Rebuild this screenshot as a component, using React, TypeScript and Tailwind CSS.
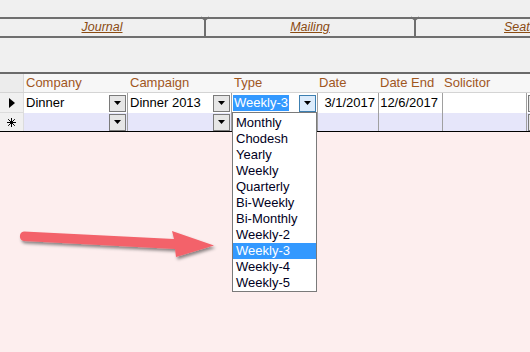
import React from 'react';

const typeOptions = [
  'Monthly',
  'Chodesh',
  'Yearly',
  'Weekly',
  'Quarterly',
  'Bi-Weekly',
  'Bi-Monthly',
  'Weekly-2',
  'Weekly-3',
  'Weekly-4',
  'Weekly-5',
];

function ComboButton({ focused = false }: { focused?: boolean }) {
  return (
    <div
      className={`w-[17px] h-[17px] shrink-0 flex items-center justify-center border ${
        focused ? 'border-[#3c7fb1] bg-[#dcecfc]' : 'border-[#7a7a7a] bg-[#e6e6e6]'
      }`}
    >
      <svg width="7" height="4" viewBox="0 0 7 4">
        <path d="M0 0h7L3.5 4z" fill="#000" />
      </svg>
    </div>
  );
}

function Tab({ label, className }: { label: string; className: string }) {
  return (
    <div className={`${className} shrink-0 flex items-center justify-center`}>
      <span className="italic underline text-[12.5px] text-[#8a4b12] font-['Liberation_Sans',Arial,sans-serif]">
        {label}
      </span>
    </div>
  );
}

function TabDivider() {
  return (
    <div className="relative w-[2px] shrink-0 bg-[#6f6f6f]">
      <svg className="absolute -top-[3px] -left-[3px]" width="8" height="5" viewBox="0 0 8 5">
        <path d="M0 1 L4 4 L8 1" stroke="#6f6f6f" strokeWidth="1.5" fill="none" />
      </svg>
    </div>
  );
}

export default function App() {
  return (
    <div className="relative w-[530px] h-[352px] overflow-hidden bg-[#fdeeee] text-[13px] text-black font-['Liberation_Sans',Arial,sans-serif]">
      {/* tab strip area */}
      <div className="h-[72px] bg-[#f0f0f0] pt-[17px]">
        <div className="flex h-[21px] border-t-2 border-b-2 border-[#6f6f6f]">
          <Tab label="Journal" className="w-[204px]" />
          <TabDivider />
          <Tab label="Mailing" className="w-[208px]" />
          <TabDivider />
          <Tab label="Seats" className="w-[208px]" />
        </div>
      </div>
      <div className="h-[2px] bg-[#6a6a6a]" />

      {/* header */}
      <div className="flex h-[19px] bg-[#f7f7f7] border-b border-[#d4d4d4] text-[#a0561e] leading-[17px]">
        <div className="w-[24px] shrink-0 bg-[#ececec] border-r border-[#d8d8d8]" />
        <div className="w-[104px] shrink-0 pl-[2px]">Company</div>
        <div className="w-[104px] shrink-0 pl-[2px]">Campaign</div>
        <div className="w-[85px] shrink-0 pl-[2px]">Type</div>
        <div className="w-[62px] shrink-0 pl-[2px]">Date</div>
        <div className="w-[64px] shrink-0 pl-[1px]">Date End</div>
        <div className="flex-1 pl-[1px]">Solicitor</div>
      </div>

      {/* current row */}
      <div className="flex h-[20px] bg-white">
        <div className="w-[24px] shrink-0 bg-[#f0f0f0] border-r border-b border-[#dcdcdc] flex items-center justify-center">
          <svg width="6" height="10" viewBox="0 0 6 10">
            <path d="M0 0L6 5L0 10z" fill="#000" />
          </svg>
        </div>
        <div className="w-[104px] shrink-0 flex items-center pl-[2px] pr-[1px] border-r border-[#a0a0a0]">
          <span className="flex-1">Dinner</span>
          <ComboButton />
        </div>
        <div className="w-[104px] shrink-0 flex items-center pl-[2px] pr-[1px] border-r border-[#a0a0a0]">
          <span className="flex-1">Dinner 2013</span>
          <ComboButton />
        </div>
        <div className="w-[85px] shrink-0 flex items-center pl-[1px] pr-[1px]">
          <span className="flex-1">
            <span className="bg-[#3399ff] text-white px-[1px] leading-[16px] inline-block">Weekly-3</span>
          </span>
          <ComboButton focused />
        </div>
        <div className="w-[62px] shrink-0 flex items-center justify-end pr-[3px] border-r border-l border-[#a0a0a0]">
          3/1/2017
        </div>
        <div className="w-[64px] shrink-0 flex items-center justify-end pr-[4px] border-r border-[#a0a0a0]">
          12/6/2017
        </div>
        <div className="w-[84px] shrink-0 border-r border-[#a0a0a0]" />
        <div className="flex items-center pl-[1px]">
          <ComboButton />
        </div>
      </div>

      {/* new record row */}
      <div className="flex h-[19px] bg-[#e6e6fa] border-b border-black">
        <div className="w-[24px] shrink-0 bg-[#f0f0f0] border-r border-[#dcdcdc] flex items-center justify-center">
          <svg width="9" height="9" viewBox="0 0 9 9">
            <path d="M4.5 0v9M0 4.5h9M1.2 1.2l6.6 6.6M7.8 1.2l-6.6 6.6" stroke="#000" strokeWidth="1" />
          </svg>
        </div>
        <div className="w-[104px] shrink-0 flex items-center justify-end pr-[1px] border-r border-[#a0a0a0]">
          <ComboButton />
        </div>
        <div className="w-[104px] shrink-0 flex items-center justify-end pr-[1px] border-r border-[#a0a0a0]">
          <ComboButton />
        </div>
        <div className="w-[85px] shrink-0" />
        <div className="w-[62px] shrink-0 border-r border-l border-[#a0a0a0]" />
        <div className="w-[64px] shrink-0 border-r border-[#a0a0a0]" />
        <div className="w-[84px] shrink-0 border-r border-[#a0a0a0]" />
        <div className="flex items-center pl-[1px]">
          <ComboButton />
        </div>
      </div>

      {/* open dropdown list */}
      <div className="absolute left-[232px] top-[112px] w-[85px] h-[180px] bg-white border border-[#7a7a7a] pt-[2px]">
        {typeOptions.map((opt) => (
          <div
            key={opt}
            className={`h-[16px] leading-[16px] pl-[3px] ${
              opt === 'Weekly-3' ? 'bg-[#3399ff] text-white' : 'text-[#000022]'
            }`}
          >
            {opt}
          </div>
        ))}
      </div>

      {/* annotation arrow */}
      <svg className="absolute left-0 top-[220px]" width="230" height="50" viewBox="0 220 230 50">
        <defs>
          <filter id="sh" x="-10%" y="-50%" width="120%" height="200%">
            <feDropShadow dx="1.5" dy="2.5" stdDeviation="1.8" floodColor="#000" floodOpacity="0.45" />
          </filter>
        </defs>
        <path
          d="M24 231.5 L174 239 L172 231 L214 245.5 L176 257 L175 249 L24 241 A4.8 4.8 0 0 1 24 231.5 Z"
          fill="#f3626a"
          filter="url(#sh)"
        />
      </svg>
    </div>
  );
}
